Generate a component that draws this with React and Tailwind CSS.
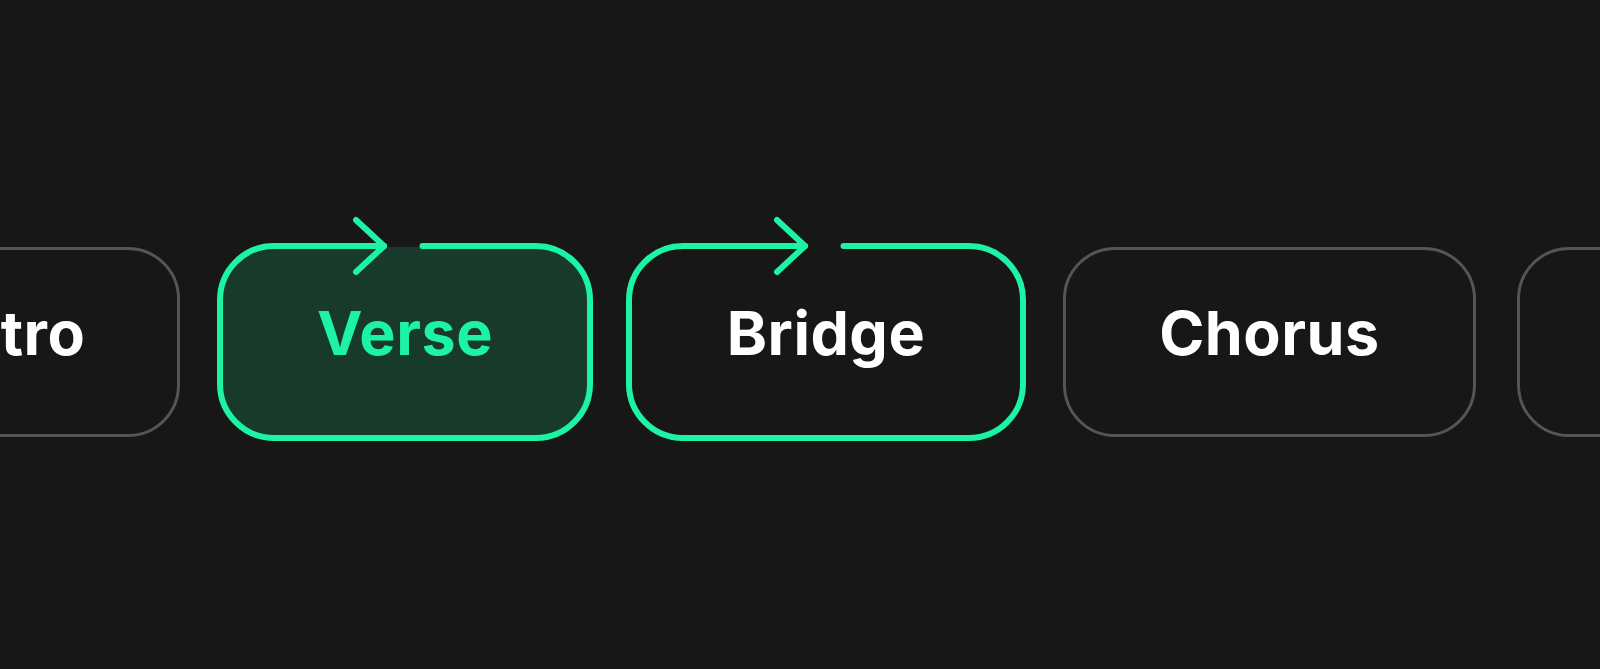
import React from "react";

const sections = [
  { id: "intro", label: "Intro", width: 330, state: "idle" },
  { id: "verse", label: "Verse", width: 368, state: "active" },
  { id: "bridge", label: "Bridge", width: 392, state: "queued" },
  { id: "chorus", label: "Chorus", width: 413, state: "idle" },
  { id: "outro", label: "Outro", width: 340, state: "idle" },
];

const BOX_H = 190;

// green loop outline with an arrow breaking the top edge
const LoopOutline = ({ width }) => {
  const W = width + 8;
  const H = BOX_H + 8;
  const s = 3;
  const R = 54;
  const cx = W / 2;
  const tip = cx - 21;
  const start = cx + 17.5;
  const d = [
    `M ${start} ${s}`,
    `H ${W - s - R}`,
    `A ${R} ${R} 0 0 1 ${W - s} ${s + R}`,
    `V ${H - s - R}`,
    `A ${R} ${R} 0 0 1 ${W - s - R} ${H - s}`,
    `H ${s + R}`,
    `A ${R} ${R} 0 0 1 ${s} ${H - s - R}`,
    `V ${s + R}`,
    `A ${R} ${R} 0 0 1 ${s + R} ${s}`,
    `H ${tip}`,
  ].join(" ");

  return (
    <svg
      className="absolute -left-[4px] -top-[4px] overflow-visible pointer-events-none"
      width={W}
      height={H}
      viewBox={`0 0 ${W} ${H}`}
      fill="none"
    >
      <path d={d} stroke="#1df3a5" strokeWidth="6" strokeLinecap="round" />
      <path
        d={`M ${tip - 28} ${s - 26} L ${tip} ${s} L ${tip - 28} ${s + 26}`}
        stroke="#1df3a5"
        strokeWidth="6"
        strokeLinecap="round"
        strokeLinejoin="round"
      />
    </svg>
  );
};

const SectionBox = ({ section }) => {
  const looped = section.state !== "idle";
  const active = section.state === "active";

  return (
    <div
      className={`relative shrink-0 h-[190px] flex items-center justify-center pb-[17px] rounded-[52px] ${
        looped ? "" : "border-[3px] border-[#555555]"
      } ${active ? "bg-[#183a2d]" : ""}`}
      style={{ width: section.width }}
    >
      {looped && <LoopOutline width={section.width} />}
      <span
        className={`text-[61px] leading-none font-bold tracking-[0.5px] whitespace-nowrap ${
          active ? "text-[#1df3a5]" : "text-white"
        }`}
      >
        {section.label}
      </span>
    </div>
  );
};

export default function App() {
  return (
    <div
      className="w-full h-[669px] bg-[#171717] overflow-hidden"
      style={{ fontFamily: "Inter, 'Liberation Sans', sans-serif" }}
    >
      <div className="flex gap-[41px] pt-[247px] ml-[-150px]">
        {sections.map((section) => (
          <SectionBox key={section.id} section={section} />
        ))}
      </div>
    </div>
  );
}
